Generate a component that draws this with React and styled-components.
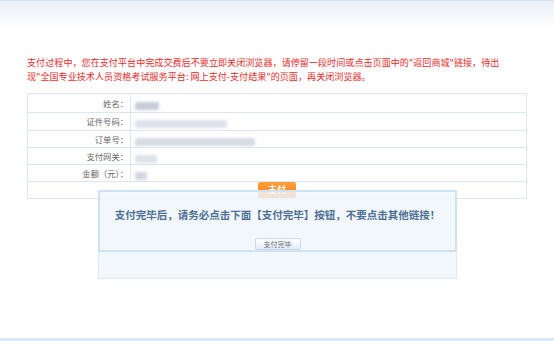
import React from 'react';
import styled, { createGlobalStyle } from 'styled-components';

const GlobalStyle = createGlobalStyle`
  html, body {
    margin: 0;
    padding: 0;
    background: #fff;
  }
  body {
    font-family: "Noto Sans CJK SC", "Noto Sans", sans-serif;
  }
`;

const Page = styled.div`
  position: relative;
  width: 554px;
  height: 341px;
  overflow: hidden;
  display: flex;
  flex-direction: column;
`;

const TopBar = styled.div`
  height: 28px;
  border-top: 1px solid #d3e2f2;
  background: linear-gradient(#eaf0f7, #ffffff);
`;

const Main = styled.div`
  flex: 1;
  width: 500px;
  margin: 0 auto;
  padding-top: 26px;
`;

const Footer = styled.div`
  height: 3px;
  background: #d6e6f5;
`;

const Notice = styled.p`
  margin: 0;
  color: #f02a2a;
  font-size: 9.1px;
  line-height: 14px;
  white-space: nowrap;
`;

const InfoTable = styled.table`
  margin-top: 10px;
  width: 500px;
  border-collapse: collapse;
  border: 1px solid #d9e7f5;
`;

const Row = styled.tr`
  height: ${p => p.$h}px;
`;

const Label = styled.td`
  width: 100px;
  padding: 0 2px 0 0;
  border: 1px solid #d9e7f5;
  text-align: right;
  font-size: 8.3px;
  color: #666;
  line-height: 1;
`;

const Value = styled.td`
  padding: 0 0 0 4px;
  border: 1px solid #d9e7f5;
  line-height: 1;
`;

const Blur = styled.span`
  display: inline-block;
  vertical-align: middle;
  width: ${p => p.$w}px;
  height: 8px;
  background: ${p => p.$c || '#cfd4dd'};
  filter: blur(1.6px);
  border-radius: 2px;
`;

const ButtonCell = styled.td`
  border: 1px solid #d9e7f5;
  vertical-align: top;
  padding: 0;
  line-height: 0;
`;

const PayButton = styled.div`
  margin: 0 auto;
  width: 38px;
  height: 16px;
  line-height: 16px;
  border-radius: 2px;
  background: linear-gradient(#ffa13a, #f47a0e);
  color: #fff;
  font-size: 9px;
  font-weight: bold;
  text-align: center;
`;

const Overlay = styled.div`
  position: absolute;
  left: 98px;
  top: 190px;
  width: 357px;
  height: 87px;
  border: 1px solid #dde9f5;
  background: rgba(240, 246, 252, 0.84);
`;

const Dialog = styled.div`
  height: 62px;
  box-sizing: border-box;
  border: 2px solid #cfe1f3;
  margin: -1px -1px 0;
  padding-top: 16px;
  display: flex;
  flex-direction: column;
  align-items: center;
`;

const DialogText = styled.div`
  font-size: 10.5px;
  line-height: 14px;
  font-weight: bold;
  color: #4d6f96;
  white-space: nowrap;
`;

const DoneButton = styled.span`
  margin-top: 16px;
  width: 44px;
  height: 10px;
  line-height: 10px;
  border: 1px solid #c6d9ed;
  border-radius: 2px;
  background: linear-gradient(#ffffff, #e2ecf7);
  font-size: 7px;
  color: #667;
  text-align: center;
`;

const rows = [
  { label: '姓名：', w: 24, h: 19, c: '#c7ccd7' },
  { label: '证件号码：', w: 92, h: 18, c: '#dde1e8' },
  { label: '订单号：', w: 120, h: 17, c: '#d6dae2' },
  { label: '支付网关：', w: 22, h: 17, c: '#dde1e8' },
  { label: '金额（元）：', w: 12, h: 17, c: '#d2d6de' },
];

export default function App() {
  return (
    <Page>
      <GlobalStyle />
      <TopBar />
      <Main>
        <Notice>
          支付过程中，您在支付平台中完成交费后不要立即关闭浏览器，请停留一段时间或点击页面中的"返回商城"链接，待出
          <br />
          现"全国专业技术人员资格考试服务平台: 网上支付-支付结果"的页面，再关闭浏览器。
        </Notice>
        <InfoTable>
          <tbody>
            {rows.map(r => (
              <Row key={r.label} $h={r.h}>
                <Label>{r.label}</Label>
                <Value><Blur $w={r.w} $c={r.c} /></Value>
              </Row>
            ))}
            <Row $h={17}>
              <ButtonCell colSpan={2}>
                <PayButton>支付</PayButton>
              </ButtonCell>
            </Row>
          </tbody>
        </InfoTable>
      </Main>
      <Footer />
      <Overlay>
        <Dialog>
          <DialogText>支付完毕后，请务必点击下面【支付完毕】按钮，不要点击其他链接！</DialogText>
          <DoneButton>支付完毕</DoneButton>
        </Dialog>
      </Overlay>
    </Page>
  );
}
